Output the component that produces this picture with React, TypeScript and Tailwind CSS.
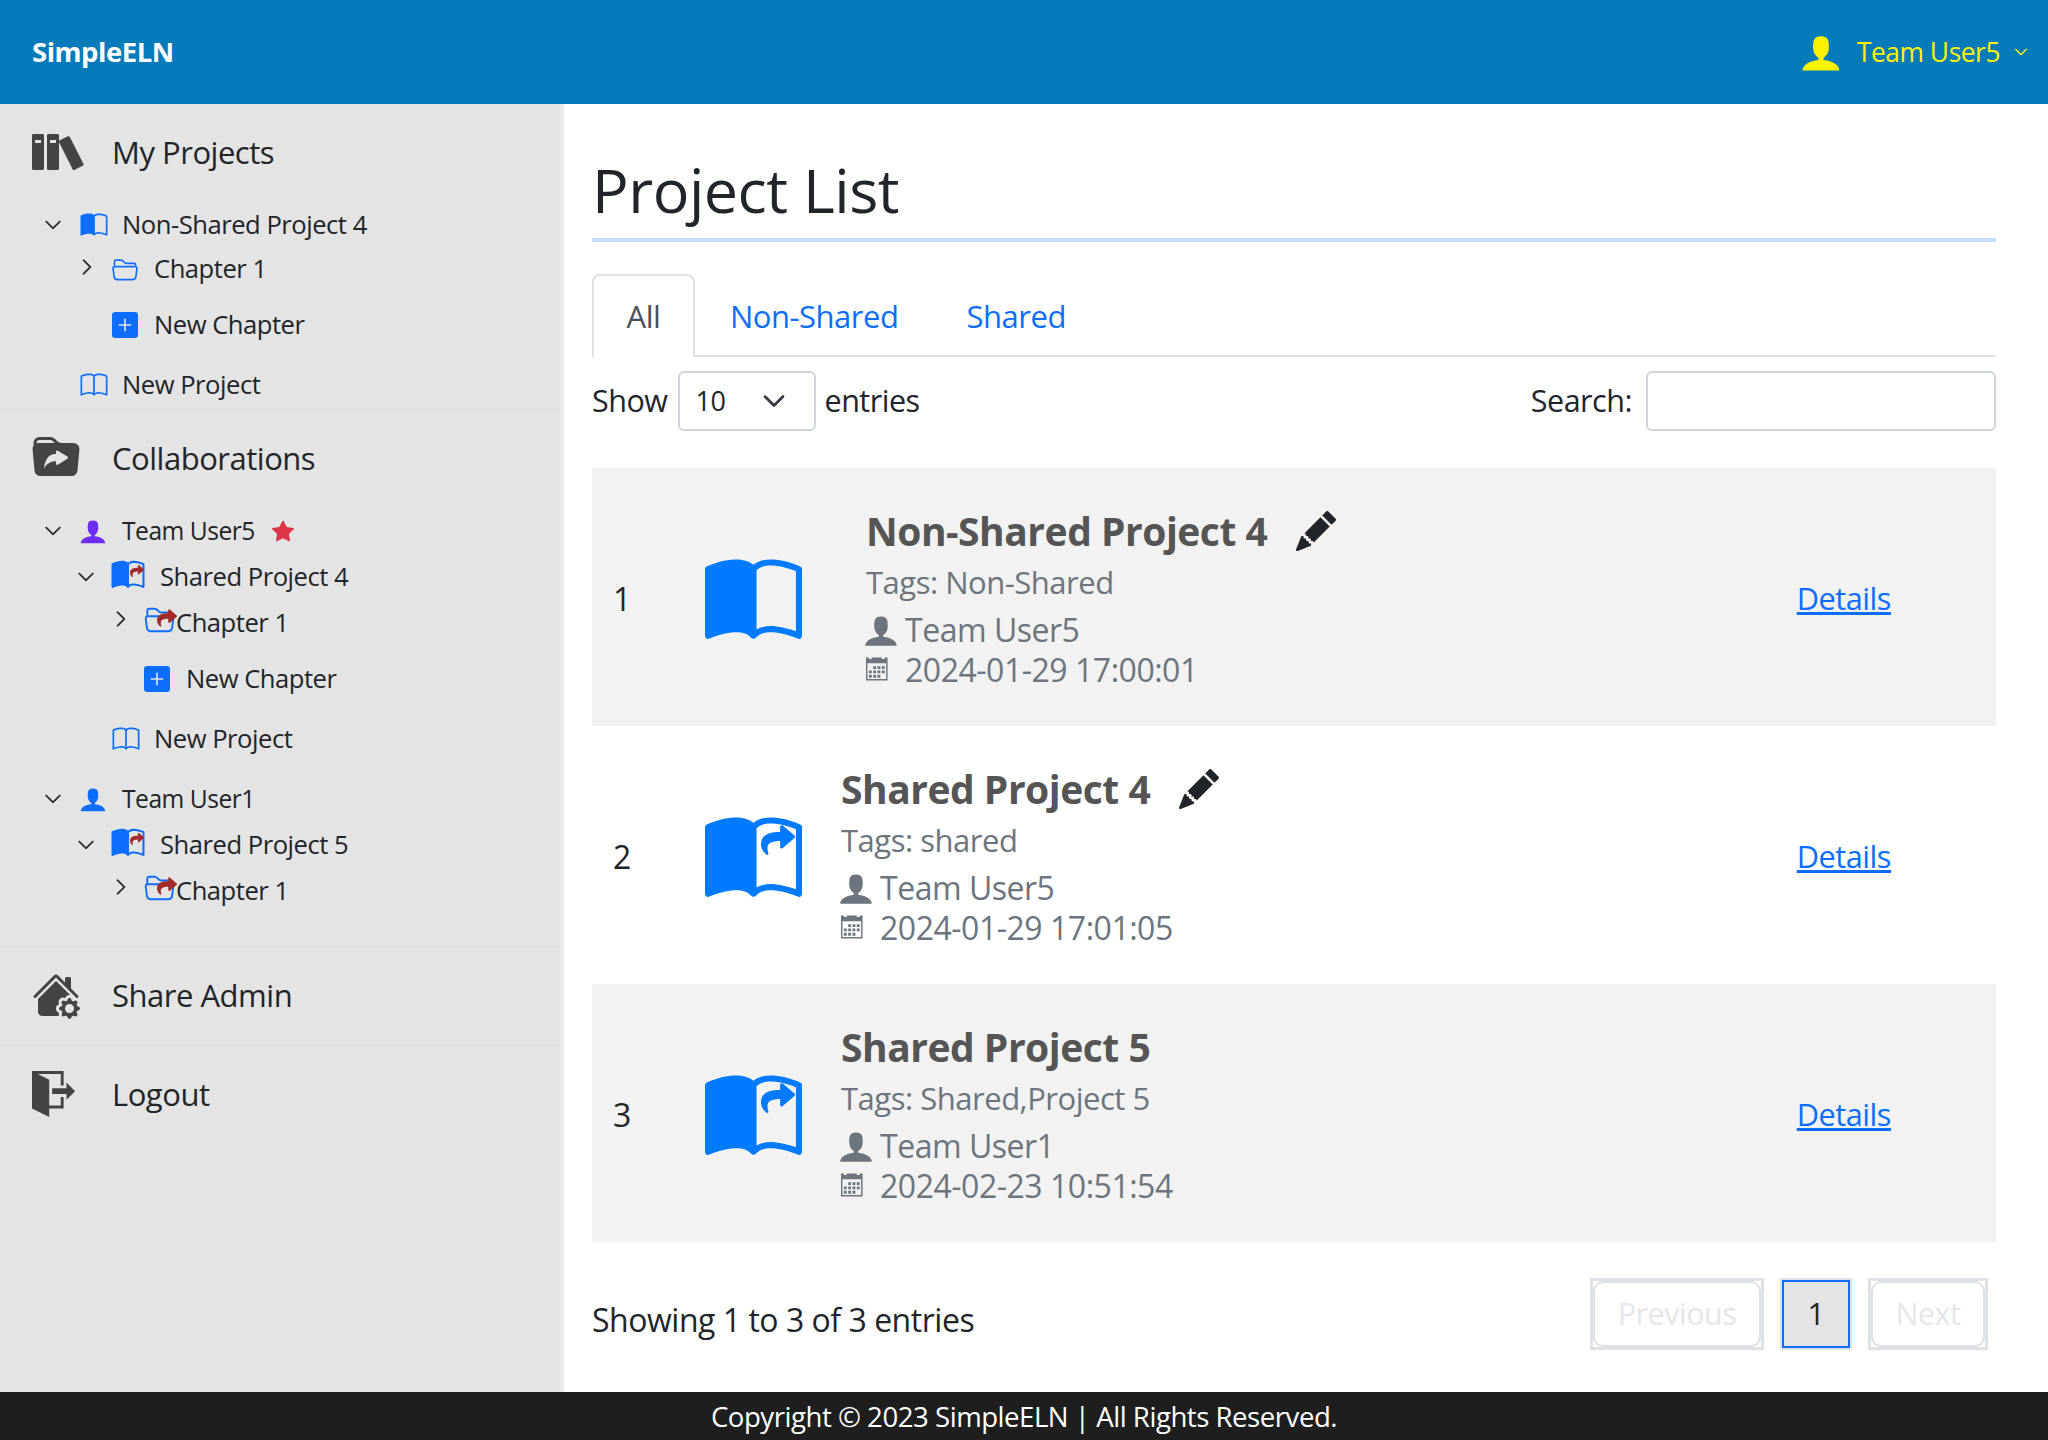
import React from 'react';
import { ImBooks, ImUser, ImCalendar, ImExit } from 'react-icons/im';
import {
  BsBook,
  BsBookHalf,
  BsChevronDown,
  BsChevronRight,
  BsFolder2Open,
  BsFolderSymlinkFill,
  BsHouseGearFill,
  BsPencilFill,
  BsPlusSquareFill,
  BsStarFill,
} from 'react-icons/bs';
import { FaShare } from 'react-icons/fa';

const Down = () => <BsChevronDown className="w-[18px] h-[18px] -ml-[1px] text-[#212529] stroke-[0.8]" />;
const Right = () => <BsChevronRight className="w-[18px] h-[18px] text-[#212529] stroke-[0.8] -mt-[4px]" />;
const RightLow = () => <BsChevronRight className="w-[18px] h-[18px] text-[#212529] stroke-[0.8] -mt-[8px]" />;

// tree row in the side bar
const Row = ({ className, chev, chevW, iconW, icon, children }: any) => (
  <div className={`flex items-center text-[#212529] text-[25.6px] ${className}`}>
    <div className={chevW}>{chev}</div>
    <div className={`${iconW} flex items-center`}>{icon}</div>
    <span>{children}</span>
  </div>
);

const SharedBook = () => (
  <div className="relative w-[33px] h-[30px] -mt-[6px]">
    <BsBookHalf className="w-[36px] h-[33px] -ml-[2px] text-[#0d6efd]" />
    <FaShare className="absolute top-[5px] right-[1px] w-[14px] h-[14px] text-[#a52a2a]" />
  </div>
);

const SharedFolder = () => (
  <div className="relative w-[31px] h-[30px] -mt-[8px]">
    <BsFolder2Open className="w-[31px] h-[30px] -ml-[1px] text-[#0d6efd]" />
    <FaShare className="absolute top-[4px] -right-[1px] w-[20px] h-[20px] text-[#a52a2a]" />
  </div>
);

const Section = ({ icon, label, className }: any) => (
  <div className={`flex items-center pl-[32px] pb-[2px] h-[98px] text-[#212529] text-[31px] ${className}`}>
    <div className="w-[80px] flex items-center">{icon}</div>
    <span>{label}</span>
  </div>
);

const projects = [
  { n: 1, name: 'Non-Shared Project 4', tags: 'Tags: Non-Shared', user: 'Team User5', date: '2024-01-29 17:00:01', shared: false, edit: true },
  { n: 2, name: 'Shared Project 4', tags: 'Tags: shared', user: 'Team User5', date: '2024-01-29 17:01:05', shared: true, edit: true },
  { n: 3, name: 'Shared Project 5', tags: 'Tags: Shared,Project 5', user: 'Team User1', date: '2024-02-23 10:51:54', shared: true, edit: false },
];

export default function App() {
  return (
    <div className="h-[1440px] flex flex-col bg-white text-[#212529] font-['Open_Sans',sans-serif] tracking-[-0.03em]">
      <header className="h-[104px] shrink-0 bg-[#077bb9] flex items-center justify-between pl-[32px] pr-[20px]">
        <span className="text-white font-bold text-[27.5px]">SimpleELN</span>
        <div className="flex items-center text-[#fff200] text-[26.4px]">
          <ImUser className="w-[42px] h-[42px] mr-[15px]" />
          <span className="pt-[2px]">Team User5</span>
          <BsChevronDown className="w-[14px] h-[14px] ml-[14px] stroke-[0.8]" />
        </div>
      </header>

      <div className="flex-1 flex min-h-0">
        <aside className="w-[564px] shrink-0 bg-[#e4e4e4] border-r-4 border-[#ececec]">
          <Section label="My Projects" icon={<ImBooks className="w-[54px] h-[54px] text-[#444]" />} />
          <Row className="h-[46px] pl-[45px]" chevW="w-[35px]" iconW="w-[42px]" chev={<Down />} icon={<BsBookHalf className="w-[30px] h-[27px] -ml-[1px] text-[#0d6efd]" />}>Non-Shared Project 4</Row>
          <Row className="h-[42px] pl-[78px]" chevW="w-[34px]" iconW="w-[42px]" chev={<Right />} icon={<BsFolder2Open className="w-[26px] h-[26px] text-[#0d6efd]" />}>Chapter 1</Row>
          <Row className="h-[70px] pl-[78px]" chevW="w-[34px]" iconW="w-[42px]" icon={<BsPlusSquareFill className="w-[26px] h-[26px] text-[#0d6efd]" />}>New Chapter</Row>
          <Row className="h-[50px] pl-[45px] pt-[2px] border-b-2 border-[#dedede]" chevW="w-[35px]" iconW="w-[42px]" icon={<BsBook className="w-[30px] h-[27px] -ml-[1px] text-[#0d6efd]" />}>New Project</Row>

          <Section label="Collaborations" icon={<BsFolderSymlinkFill className="w-[48px] h-[48px] text-[#444]" />} />
          <Row className="h-[46px] pl-[45px]" chevW="w-[35px]" iconW="w-[42px]" chev={<Down />} icon={<ImUser className="w-[28px] h-[28px] -ml-[1px] text-[#6f2cf5]" />}>
            <span className="text-[24.6px]">Team User5</span>
            <BsStarFill className="inline w-[22px] h-[22px] ml-[17px] -mt-[3px] text-[#dc3545]" />
          </Row>
          <Row className="h-[46px] pl-[78px]" chevW="w-[34px]" iconW="w-[48px]" chev={<Down />} icon={<SharedBook />}>Shared Project 4</Row>
          <Row className="h-[46px] pl-[112px]" chevW="w-[33px]" iconW="w-[31px]" chev={<RightLow />} icon={<SharedFolder />}>Chapter 1</Row>
          <Row className="h-[66px] pl-[112px]" chevW="w-[32px]" iconW="w-[42px]" icon={<BsPlusSquareFill className="w-[26px] h-[26px] text-[#0d6efd]" />}>New Chapter</Row>
          <Row className="h-[54px] pl-[78px]" chevW="w-[34px]" iconW="w-[42px]" icon={<BsBook className="w-[30px] h-[27px] -ml-[1px] text-[#0d6efd]" />}>New Project</Row>
          <Row className="h-[46px] pl-[45px] mt-[10px]" chevW="w-[35px]" iconW="w-[42px]" chev={<Down />} icon={<ImUser className="w-[28px] h-[28px] -ml-[1px] text-[#0d6efd]" />}>
            <span className="text-[24.6px]">Team User1</span>
          </Row>
          <Row className="h-[46px] pl-[78px]" chevW="w-[34px]" iconW="w-[48px]" chev={<Down />} icon={<SharedBook />}>Shared Project 5</Row>
          <Row className="h-[46px] pl-[112px]" chevW="w-[33px]" iconW="w-[31px]" chev={<RightLow />} icon={<SharedFolder />}>Chapter 1</Row>
          <div className="h-[34px] border-b-2 border-[#dedede]" />

          <Section label="Share Admin" className="border-b-2 border-[#dedede]" icon={<BsHouseGearFill className="w-[48px] h-[48px] text-[#444]" />} />
          <Section label="Logout" icon={<ImExit className="w-[46px] h-[48px] text-[#444]" />} />
        </aside>

        <main className="flex-1 min-w-0 pl-[28px] pr-[52px] text-[32px]">
          <h2 className="h-[138px] border-b-4 border-[#c2dbfe] text-[61px] pt-[47px] leading-[78px]">Project List</h2>

          <div className="mt-[32px] flex h-[83px] border-b-2 border-[#dee2e6] text-[31px]">
            <div className="w-[103px] h-[83px] border-2 border-b-0 border-[#dee2e6] rounded-t-[8px] bg-white flex items-center justify-center text-[#495057]">All</div>
            <div className="px-[35px] pt-[3px] flex items-center text-[#0d6efd]">Non-Shared</div>
            <div className="px-[33px] pt-[3px] flex items-center text-[#0d6efd]">Shared</div>
          </div>

          <div className="mt-[14px] flex items-center justify-between h-[60px] text-[30.5px]">
            <div className="flex items-center">
              <span>Show</span>
              <div className="ml-[10px] mr-[9px] w-[138px] h-[60px] border-2 border-[#ced4da] rounded-[6px] flex items-center justify-between pl-[16px] pr-[28px]">
                <span className="text-[27px]">10</span>
                <BsChevronDown className="w-[24px] h-[24px] text-[#343a40] stroke-[0.8]" />
              </div>
              <span>entries</span>
            </div>
            <div className="flex items-center">
              <span>Search:</span>
              <div className="ml-[14px] w-[350px] h-[60px] border-2 border-[#ced4da] rounded-[6px]" />
            </div>
          </div>

          <div className="mt-[37px]">
            {projects.map((p) => (
              <div key={p.n} className={`h-[258px] flex items-center pr-[105px] ${p.n % 2 ? 'bg-[#f2f2f2]' : 'bg-white'}`}>
                <div className="w-[113px] pl-[21px] pt-[3px]">{p.n}</div>
                <div className="relative w-[97px] h-[97px] mt-[10px]">
                  <BsBookHalf className="w-[97px] h-[97px] text-[#007bff]" />
                  {p.shared && <FaShare className="absolute top-[11px] right-[7px] w-[34px] h-[34px] text-[#007bff]" />}
                </div>
                <div className={`flex-1 flex flex-col mt-[3px] ${p.shared ? 'ml-[39px]' : 'ml-[64px]'}`}>
                  <div className="h-[49px] flex items-center text-[#555] font-bold text-[39px]">
                    <span>{p.name}</span>
                    {p.edit && <BsPencilFill className="w-[40px] h-[40px] ml-[29px] -mt-[2px] text-[#212529]" />}
                  </div>
                  <div className="h-[53px] flex items-center text-[#6c757d] text-[31px]">{p.tags}</div>
                  <div className="h-[41px] flex items-center text-[#6c757d]">
                    <ImUser className="w-[36px] h-[36px] -ml-[3px] mr-[6px]" />
                    {p.user}
                  </div>
                  <div className="h-[40px] flex items-center text-[#6c757d]">
                    <ImCalendar className="w-[23px] h-[24px] mr-[16px] -mt-[3px]" />
                    {p.date}
                  </div>
                </div>
                <a className="text-[#0d6efd] underline pt-[3px] text-[30.7px]">Details</a>
              </div>
            ))}
          </div>

          <div className="mt-[36px] flex justify-between pr-[8px]">
            <span className="mt-[18px]">Showing 1 to 3 of 3 entries</span>
            <div className="flex gap-[16px] h-[72px] text-[30.5px]">
              <div className="w-[174px] h-[72px] border-[3px] border-[#dee2e6]">
                <div className="h-full border-2 border-[#dee2e6] rounded-[10px] flex items-center justify-center text-[#e5e7e9]">Previous</div>
              </div>
              <div className="w-[72px] h-[72px] border-2 border-[#dee2e6]">
                <div className="h-full border-2 border-[#0d6efd] bg-[#e4e4e4] flex items-center justify-center">1</div>
              </div>
              <div className="w-[120px] h-[72px] border-[3px] border-[#dee2e6]">
                <div className="h-full border-2 border-[#dee2e6] rounded-[10px] flex items-center justify-center text-[#e5e7e9]">Next</div>
              </div>
            </div>
          </div>
        </main>
      </div>

      <footer className="h-[48px] pt-[2px] shrink-0 bg-[#1e1e1e] text-white text-[27.6px] flex items-center justify-center">
        Copyright © 2023 SimpleELN | All Rights Reserved.
      </footer>
    </div>
  );
}
